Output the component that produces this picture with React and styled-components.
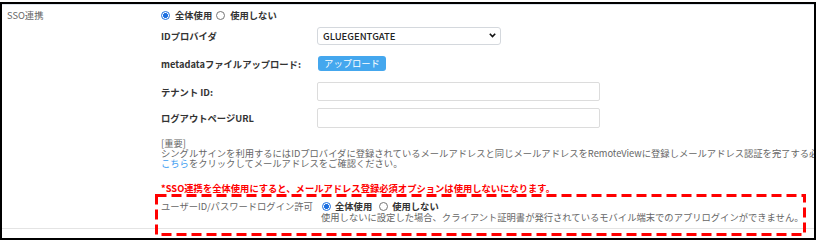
import React from 'react';
import styled, { createGlobalStyle } from 'styled-components';

const Global = createGlobalStyle`
  html, body { margin: 0; padding: 0; background: #fff; }
  body {
    font-family: "Noto Sans CJK JP", "Noto Sans", sans-serif;
    font-size: 9.3px;
    color: #333;
  }
  * { box-sizing: border-box; }
`;

const Frame = styled.div`
  width: 816px;
  height: 238px;
  margin-top: 2px;
  border: 2px solid #000;
  overflow: hidden;
  background: #fff;
`;

const Row = styled.div`
  display: flex;
  border-top: 1px solid #dde4ec;
  border-bottom: 1px solid #e4e4e4;
`;

const LabelCell = styled.div`
  width: 153px;
  flex: none;
  padding-left: 5px;
  line-height: 20px;
  color: #666;
`;

const ContentCell = styled.div`
  flex: 1;
  min-width: 0;
  padding-left: 6px;
  padding-bottom: 5px;
`;

const FormRow = styled.div`
  display: grid;
  grid-template-columns: ${(p) => p.$labelWidth || 156}px auto;
  align-items: center;
  height: ${(p) => p.$h}px;
`;

const FieldLabel = styled.div`
  font-weight: 700;
  color: #333;
  white-space: nowrap;
`;

const RadioGroup = styled.div`
  display: flex;
  align-items: center;
  gap: ${(p) => p.$gap}px;
  height: ${(p) => p.$h || 'auto'};
`;

const RadioLabel = styled.label`
  display: inline-flex;
  align-items: center;
  gap: ${(p) => p.$gap}px;
  font-weight: 700;
  color: #333;
  white-space: nowrap;
`;

const Radio = styled.input.attrs({ type: 'radio' })`
  appearance: none;
  margin: 0 0 0 ${(p) => p.$ml || 0}px;
  width: 9px;
  height: 9px;
  border-radius: 50%;
  border: 1px solid #767676;
  background: #fff;
  &:checked {
    border-color: #1d6fe0;
    background: radial-gradient(circle, #1d6fe0 0 2.2px, #fff 2.8px);
  }
`;

const SelectWrap = styled.div`
  position: relative;
  width: 184px;
  height: 18px;
`;

const Select = styled.select`
  appearance: none;
  width: 100%;
  height: 100%;
  border: 1px solid #d4d8dd;
  border-radius: 3px;
  background: #fff;
  padding: 0 0 0 5px;
  font-family: inherit;
  font-size: 9.5px;
  color: #222;
  font-weight: 500;
`;

const Chevron = styled.svg`
  position: absolute;
  right: 5px;
  top: 6px;
  pointer-events: none;
`;

const UploadButton = styled.button`
  width: 68px;
  height: 15px;
  margin-left: 1px;
  border: none;
  border-radius: 3px;
  background: #44a7ee;
  color: #fff;
  font-family: inherit;
  font-size: 9.3px;
  padding: 0;
  line-height: 15px;
`;

const TextInput = styled.input.attrs({ type: 'text' })`
  width: 283px;
  height: ${(p) => p.$h}px;
  border: 1px solid #dcdcdc;
  border-radius: 2px;
  margin: 0;
  background: #fff;
`;

const Notes = styled.div`
  margin-top: 4px;
  line-height: 10px;
  color: #666;
`;

const NoWrapLine = styled.div`
  white-space: nowrap;
`;

const Link = styled.a`
  color: #3b9cf0;
  text-decoration: none;
`;

const Warning = styled.div`
  margin-top: 15px;
  line-height: 10px;
  color: #ff0000;
  font-weight: 700;
  white-space: nowrap;
`;

const SubRow = styled.div`
  position: relative;
  margin-top: 8px;
  display: grid;
  grid-template-columns: 160px auto;
  line-height: 11px;
  color: #666;
`;

const SubLabel = styled.div`
  white-space: nowrap;
`;

const Description = styled.div`
  grid-column: 2;
  white-space: nowrap;
`;

const Highlight = styled.svg`
  position: absolute;
  left: -6px;
  top: -7px;
  pointer-events: none;
`;

export default function App() {
  return (
    <>
      <Global />
      <Frame>
        <Row>
          <LabelCell>SSO連携</LabelCell>
          <ContentCell>
            <RadioGroup $gap={4} $h="20px">
              <RadioLabel $gap={5}>
                <Radio name="sso" defaultChecked />
                全体使用
              </RadioLabel>
              <RadioLabel $gap={5}>
                <Radio name="sso" />
                使用しない
              </RadioLabel>
            </RadioGroup>

            <FormRow $h={21}>
              <FieldLabel>IDプロバイダ</FieldLabel>
              <SelectWrap>
                <Select defaultValue="g">
                  <option value="g">GLUEGENTGATE</option>
                </Select>
                <Chevron width="7" height="5" viewBox="0 0 7 5">
                  <path d="M0.8 0.8 L3.5 3.6 L6.2 0.8" fill="none" stroke="#111" strokeWidth="1.6" />
                </Chevron>
              </SelectWrap>
            </FormRow>

            <FormRow $h={35}>
              <FieldLabel>metadataファイルアップロード:</FieldLabel>
              <div>
                <UploadButton>アップロード</UploadButton>
              </div>
            </FormRow>

            <FormRow $h={21}>
              <FieldLabel>テナント ID:</FieldLabel>
              <TextInput $h={19} />
            </FormRow>

            <FormRow $h={32}>
              <FieldLabel>ログアウトページURL</FieldLabel>
              <TextInput $h={20} />
            </FormRow>

            <Notes>
              <div>[重要]</div>
              <NoWrapLine>
                シングルサインを利用するにはIDプロバイダに登録されているメールアドレスと同じメールアドレスをRemoteViewに登録しメールアドレス認証を完了する必要があります。
              </NoWrapLine>
              <NoWrapLine>
                <Link href="#">こちら</Link>をクリックしてメールアドレスをご確認ください。
              </NoWrapLine>
            </Notes>

            <Warning>*SSO連携を全体使用にすると、メールアドレス登録必須オプションは使用しないになります。</Warning>

            <SubRow>
              <SubLabel>ユーザーID/パスワードログイン許可</SubLabel>
              <RadioGroup $gap={7}>
                <RadioLabel $gap={4}>
                  <Radio name="pw" defaultChecked $ml={1} />
                  全体使用
                </RadioLabel>
                <RadioLabel $gap={4}>
                  <Radio name="pw" />
                  使用しない
                </RadioLabel>
              </RadioGroup>
              <Description>
                使用しないに設定した場合、クライアント証明書が発行されているモバイル端末でのアプリログインができません。
              </Description>
              <Highlight width="651" height="42" viewBox="0 0 651 42">
                <rect
                  x="1.5"
                  y="1.5"
                  width="648"
                  height="39"
                  fill="none"
                  stroke="#ff0000"
                  strokeWidth="3"
                  strokeDasharray="10 5"
                />
              </Highlight>
            </SubRow>
          </ContentCell>
        </Row>
      </Frame>
    </>
  );
}
